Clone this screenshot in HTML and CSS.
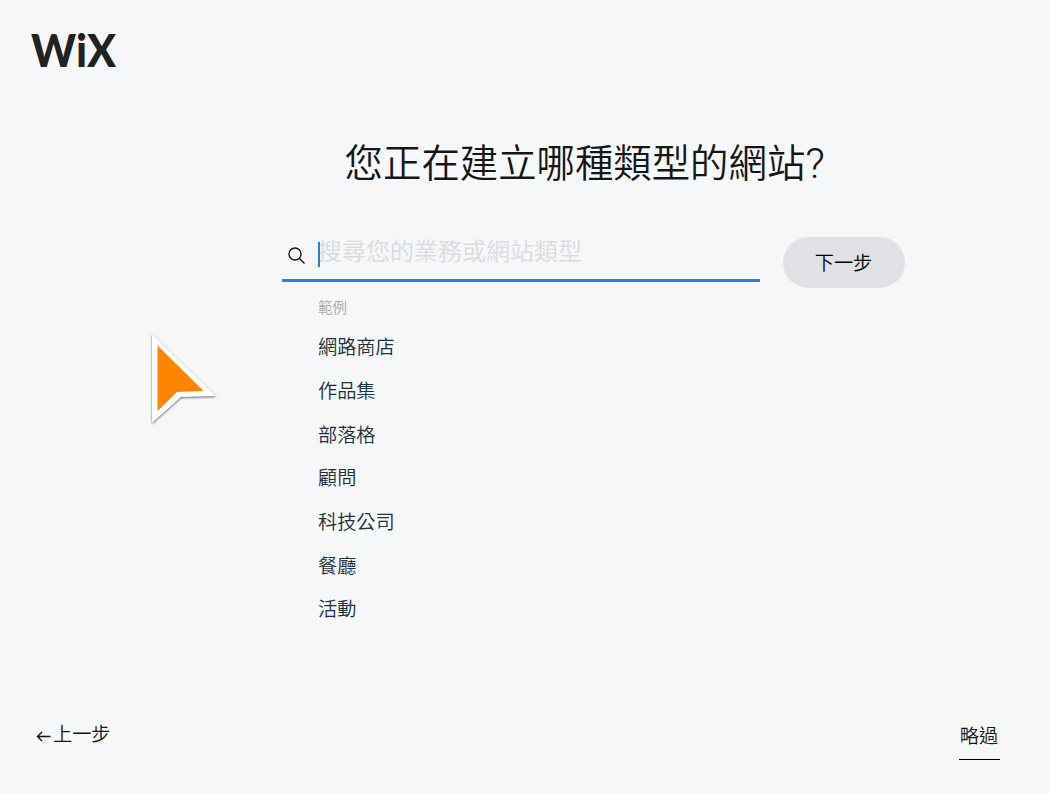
FILE: index.html
```html
<!DOCTYPE html>
<html lang="zh-Hant">

<head>
    <meta charset="UTF-8">
    <meta name="viewport" content="width=device-width, initial-scale=1.0">
    <title>Wix</title>
    <link rel="stylesheet" href="styles.css">
</head>

<body>
    <header>
        <svg class="logo" width="100" height="60" viewBox="0 0 100 60">
            <text y="46" x="1" textLength="85" lengthAdjust="spacingAndGlyphs">WiX</text>
        </svg>
    </header>

    <main>
        <h1>您正在建立哪種類型的網站<span>?</span></h1>

        <div class="search-row">
            <div class="search">
                <svg class="search-icon" width="18" height="18" viewBox="0 0 18 18">
                    <circle cx="7" cy="7" r="6" />
                    <path d="M11.3 11.3 L16.5 16.5" />
                </svg>
                <div class="field"><span class="caret"></span>搜尋您的業務或網站類型</div>
            </div>
            <button class="btn">下一步</button>
        </div>

        <div class="examples">
            <p>範例</p>
            <ul>
                <li>網路商店</li>
                <li>作品集</li>
                <li>部落格</li>
                <li>顧問</li>
                <li>科技公司</li>
                <li>餐廳</li>
                <li>活動</li>
            </ul>
        </div>
    </main>

    <footer>
        <a class="back">
            <svg width="15" height="11" viewBox="0 0 15 11">
                <path d="M14.5 5.5 H1.5 M6 1 L1.5 5.5 L6 10" />
            </svg>
            <span>上一步</span>
        </a>
        <a class="skip">略過</a>
    </footer>

    <svg class="pointer" width="80" height="100" viewBox="0 0 80 100">
        <path class="pointer-edge" d="M7 8 L71 70 L36 71 L7 97 Z" />
        <path class="pointer-fill" d="M12.5 19.5 L58.5 65 L32 66 L12.5 85 Z" />
    </svg>
</body>

</html>
```

FILE: styles.css
```css
* {
    box-sizing: border-box;
}

body {
    margin: 0;
    height: 794px;
    display: flex;
    flex-direction: column;
    overflow: hidden;
    background-color: #f5f7f9;
    color: #161616;
    font-family: "Noto Sans CJK TC", sans-serif;
    font-size: 19.2px;
    font-weight: 350;
}

header {
    height: 130px;
    padding: 21px 0 0 30px;
}

.logo {
    display: block;
}

.logo text {
    font: 900 46px Lato, sans-serif;
    fill: #222;
}

main {
    flex: 1;
    padding-left: 282px;
}

h1 {
    height: 60px;
    margin: 0 0 0 62.6px;
    font-size: 38.4px;
    font-weight: 350;
    line-height: 60px;
}

h1 span {
    font-family: Roboto, sans-serif;
    font-size: 43px;
    font-weight: 300;
    line-height: 1;
    vertical-align: -1px;
}

.search-row {
    display: flex;
    gap: 23px;
    margin-top: 47px;
}

.search {
    display: flex;
    width: 478px;
    height: 45px;
    border-bottom: 3px solid #2b7de9;
}

.search-icon {
    margin: 10px 12px 0 6px;
    fill: none;
    stroke: #161616;
    stroke-width: 1.4;
}

.field {
    position: relative;
    color: #d9dbdf;
    font-size: 24px;
    line-height: 25px;
}

.caret {
    position: absolute;
    left: 0;
    top: 5px;
    width: 2px;
    height: 25px;
    background-color: #2b7de9;
}

.btn {
    width: 122px;
    height: 51px;
    padding: 0 1px 2px 0;
    border: none;
    border-radius: 26px;
    background-color: #e0e1e5;
    color: #000;
    font: inherit;
}

.examples {
    padding-left: 36px;
}

.examples p {
    margin: 8px 0 0;
    color: #a3abb1;
    font-size: 14.4px;
    line-height: 22px;
}

ul {
    margin: 7.2px 0 0;
    padding: 0;
    list-style: none;
}

li {
    color: #20303c;
    line-height: 43.7px;
}

footer {
    display: flex;
    justify-content: space-between;
    align-items: flex-start;
    height: 76px;
    padding: 0 50px 0 36px;
}

.back {
    display: flex;
    align-items: center;
    gap: 2px;
    line-height: 30px;
}

.back svg {
    margin-top: 6px;
    fill: none;
    stroke: #161616;
    stroke-width: 1.4;
}

.skip {
    width: 41px;
    height: 42px;
    padding-right: 1px;
    border-bottom: 1px solid #000;
    text-align: center;
    line-height: 34px;
}

/* big orange pointer lying over the page */
.pointer {
    position: absolute;
    left: 145px;
    top: 326px;
    filter: drop-shadow(0 1px 1px rgba(0, 0, 0, 0.6));
}

.pointer-edge {
    fill: #fff;
}

.pointer-fill {
    fill: #ff8400;
}
```
